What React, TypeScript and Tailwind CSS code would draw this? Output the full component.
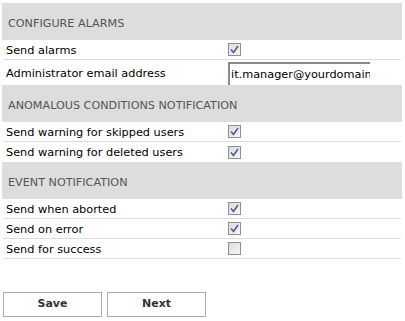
import React from "react";

function Check({ checked }: { checked: boolean }) {
  return (
    <span className="inline-flex w-[13px] h-[13px] border border-[#8e8f8f] bg-gradient-to-br from-[#dcdcdc] to-[#f6f6f6] items-center justify-center">
      {checked && (
        <svg width="9" height="9" viewBox="0 0 9 9">
          <path d="M1 4.5 L3.5 7.5 L8 1" fill="none" stroke="#4a5f97" strokeWidth="1.6" />
        </svg>
      )}
    </span>
  );
}

function Heading({ children }: { children: React.ReactNode }) {
  return (
    <div className="h-[37px] bg-[#dddddd] flex items-center pl-[6px] pt-[5px] text-[11.2px] text-[#555555]">
      {children}
    </div>
  );
}

function Row({ label, children, last }: { label: string; children: React.ReactNode; last?: boolean }) {
  return (
    <div className={"flex items-center h-[20px] mx-[1px] " + (last ? "" : "border-b border-[#dddddd]")}>
      <div className="w-[225px] pl-[3px] pt-[3px] text-[11.3px] text-black">{label}</div>
      <div className="flex items-center">{children}</div>
    </div>
  );
}

export default function App() {
  return (
    <div className="w-[405px] h-[321px] bg-white pt-[3px] px-[2px]" style={{ fontFamily: '"DejaVu Sans", Verdana, sans-serif' }}>
      <div className="w-[400px]">
        <Heading>CONFIGURE ALARMS</Heading>
        <Row label="Send alarms">
          <Check checked />
        </Row>
        <div className="flex items-end h-[25px] mx-[1px]">
          <div className="w-[225px] pl-[3px] pb-[2px] text-[11.3px] text-black">Administrator email address</div>
          <div className="w-[142px] h-[23px] border-t-2 border-l-2 border-t-[#8a8a8a] border-l-[#8a8a8a] text-[11.3px] pl-[1px] pt-[2px] overflow-hidden whitespace-nowrap leading-[17px] text-black">
            it.manager@yourdomain.com
          </div>
        </div>
        <Heading>ANOMALOUS CONDITIONS NOTIFICATION</Heading>
        <Row label="Send warning for skipped users">
          <Check checked />
        </Row>
        <Row label="Send warning for deleted users" last>
          <Check checked />
        </Row>
        <Heading>EVENT NOTIFICATION</Heading>
        <Row label="Send when aborted">
          <Check checked />
        </Row>
        <Row label="Send on error">
          <Check checked />
        </Row>
        <Row label="Send for success">
          <Check checked={false} />
        </Row>
      </div>
      <div className="flex gap-[5px] mt-[33px] pl-[1px]">
        <button className="w-[99px] h-[25px] border border-[#aaaaaa] bg-white text-[11px] font-bold text-[#333333]">Save</button>
        <button className="w-[99px] h-[25px] border border-[#aaaaaa] bg-white text-[11px] font-bold text-[#333333]">Next</button>
      </div>
    </div>
  );
}
